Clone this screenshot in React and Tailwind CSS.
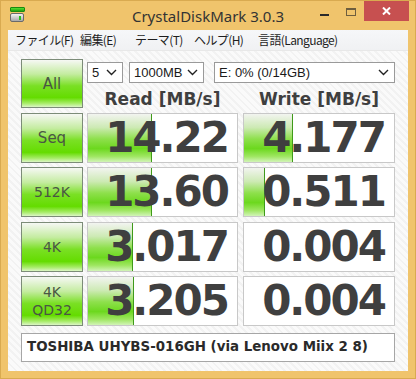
import React from 'react';

const rows = [
  { label: ['Seq'], big: true, read: '14.22', write: '4.177', rw: 64, ww: 49 },
  { label: ['512K'], read: '13.60', write: '0.511', rw: 64, ww: 21 },
  { label: ['4K'], read: '3.017', write: '0.004', rw: 45, ww: 0 },
  { label: ['4K', 'QD32'], read: '3.205', write: '0.004', rw: 46, ww: 0 },
];

const btnBg =
  'bg-[linear-gradient(to_bottom,#f6f8f4_0%,#c4eca0_30%,#7ae024_55%,#64dc00_80%,#a6ec66_92%,#dcf6c6_100%)]';

const Chevron = () => (
  <svg width="11" height="7" viewBox="0 0 11 7" fill="none">
    <path d="M1 1 L5.5 5.5 L10 1" stroke="#222" strokeWidth="1.4" />
  </svg>
);

const Select = ({ w, children }) => (
  <div
    className={`${w} h-[21px] bg-white border border-[#9a9a9a] flex items-center justify-between pl-[4px] pr-[5px] text-[13px] text-[#1a1a1a] leading-none`}
    style={{ fontFamily: '"Liberation Sans", Arial, sans-serif' }}
  >
    <span>{children}</span>
    <Chevron />
  </div>
);

const Button = ({ lines, big, h }) => (
  <div
    className={`w-[62px] ${h} border border-[#7c8c78] ${btnBg} flex flex-col items-center justify-center text-[#4a5644] ${big ? 'text-[15px]' : 'text-[14px]'} leading-[18px] mr-[4px] shrink-0`}
    style={{ fontFamily: '"DejaVu Sans", sans-serif' }}
  >
    {lines.map((l) => (
      <span key={l}>{l}</span>
    ))}
  </div>
);

const Value = ({ text, bar, w }) => (
  <div className={`${w} h-full bg-white border border-[#c8c8c8] relative flex items-center justify-end pr-[9px] overflow-hidden`}>
    {bar > 0 && (
      <div
        className="absolute left-0 top-0 bottom-0 border-r border-[#3f9a1a] bg-[linear-gradient(to_bottom,#f2f4f0_0%,#cdeab4_28%,#8ee04c_52%,#6cd81e_72%,#9ee660_88%,#d2f4b8_100%)]"
        style={{ width: bar }}
      />
    )}
    <span
      className="relative text-[42px] font-bold tracking-[-2px] text-[#3f3f3f] leading-none"
      style={{ fontFamily: '"DejaVu Sans", sans-serif' }}
    >
      {text}
    </span>
  </div>
);

export default function App() {
  return (
    <div className="w-[416px] h-[379px] bg-[#f0c46c] border border-[#d9aa50] flex flex-col overflow-hidden">
      {/* title bar */}
      <div className="h-[29px] flex items-start relative shrink-0">
        <div className="ml-[9px] mt-[6px] w-[16px] h-[16px] flex flex-col items-start">
          <div className="w-[15px] h-[5px] bg-[linear-gradient(to_bottom,#58e030,#20a010)] border border-[#1a8a10] rounded-[1px]" />
          <div className="mt-[1px] w-[14px] h-[9px] rounded-[2px] border border-[#6a6a6a] bg-[linear-gradient(to_bottom,#f4f4f4,#a8a8a8)] flex items-center justify-end pr-[2px]">
            <div className="w-[2px] h-[4px] bg-[#28c020]" />
          </div>
        </div>
        <div
          className="absolute left-0 right-0 top-[5px] text-center text-[15px] text-[#333] leading-[20px]"
          style={{ fontFamily: '"Noto Sans", sans-serif' }}
        >
          CrystalDiskMark 3.0.3
        </div>
        <div className="ml-auto flex items-start">
          <div className="w-[9px] h-[2px] bg-[#2a2a2a] mt-[13px] mr-[17px]" />
          <div className="w-[10px] h-[8px] border border-[#6e5e3e] border-t-2 mt-[7px] mr-[8px]" />
          <div className="w-[45px] h-[20px] bg-[#c75050] flex items-center justify-center mr-[6px]">
            <svg width="9" height="8" viewBox="0 0 9 8">
              <path d="M1 0.5 L8 7.5 M8 0.5 L1 7.5" stroke="#fff" strokeWidth="2" />
            </svg>
          </div>
        </div>
      </div>

      {/* menu bar */}
      <div
        className="mx-[7px] h-[20px] bg-[linear-gradient(to_bottom,#f6f7f9,#f0f1f3)] flex items-center pl-[7px] text-[12px] tracking-[-0.6px] text-[#1e1e1e] leading-none whitespace-nowrap shrink-0"
        style={{ fontFamily: '"Noto Sans CJK JP", "Noto Sans", sans-serif' }}
      >
        <span className="w-[65px] shrink-0">ファイル(F)</span>
        <span className="w-[55px] shrink-0">編集(E)</span>
        <span className="w-[59px] shrink-0">テーマ(T)</span>
        <span className="w-[64px] shrink-0">ヘルプ(H)</span>
        <span className="shrink-0">言語(Language)</span>
      </div>

      {/* content */}
      <div className="mx-[7px] h-[321px] border-t border-[#e8e8e8] bg-[repeating-linear-gradient(45deg,#f2f2f2_0px,#f2f2f2_2px,#fafafa_2px,#fafafa_5px)] pl-[13px] pt-[8px] flex flex-col shrink-0">
        <div className="flex h-[49px]">
          <Button lines={['All']} big h="h-[49px]" />
          <div className="flex flex-col">
            <div className="flex mt-[3px] items-center">
              <Select w="w-[36px]">5</Select>
              <div className="w-[6px]" />
              <Select w="w-[75px]">1000MB</Select>
              <div className="w-[10px]" />
              <Select w="w-[181px]">E: 0% (0/14GB)</Select>
            </div>
            <div
              className="flex mt-[7px] font-bold text-[17px] text-[#3f3f3f] leading-[18px]"
              style={{ fontFamily: '"DejaVu Sans", sans-serif' }}
            >
              <div className="w-[151px] text-center mr-[5px]">Read [MB/s]</div>
              <div className="w-[152px] text-center">Write [MB/s]</div>
            </div>
          </div>
        </div>

        {rows.map((r, i) => (
          <div key={i} className={`flex h-[50px] ${i === 0 ? 'mt-[5px]' : i === 2 ? 'mt-[5px]' : 'mt-[4px]'}`}>
            <Button lines={r.label} big={r.big} h="h-[50px]" />
            <div className="mr-[5px] h-full flex">
              <Value text={r.read} bar={r.rw} w="w-[151px]" />
            </div>
            <Value text={r.write} bar={r.ww} w="w-[152px]" />
          </div>
        ))}

        <div
          className="mt-[7px] w-[374px] h-[29px] bg-white border border-[#a6a6a6] flex items-center pl-[5px] font-bold text-[13.4px] text-[#2a2a2a]"
          style={{ fontFamily: '"DejaVu Sans", sans-serif' }}
        >
          TOSHIBA UHYBS-016GH (via Lenovo Miix 2 8)
        </div>
      </div>
    </div>
  );
}
